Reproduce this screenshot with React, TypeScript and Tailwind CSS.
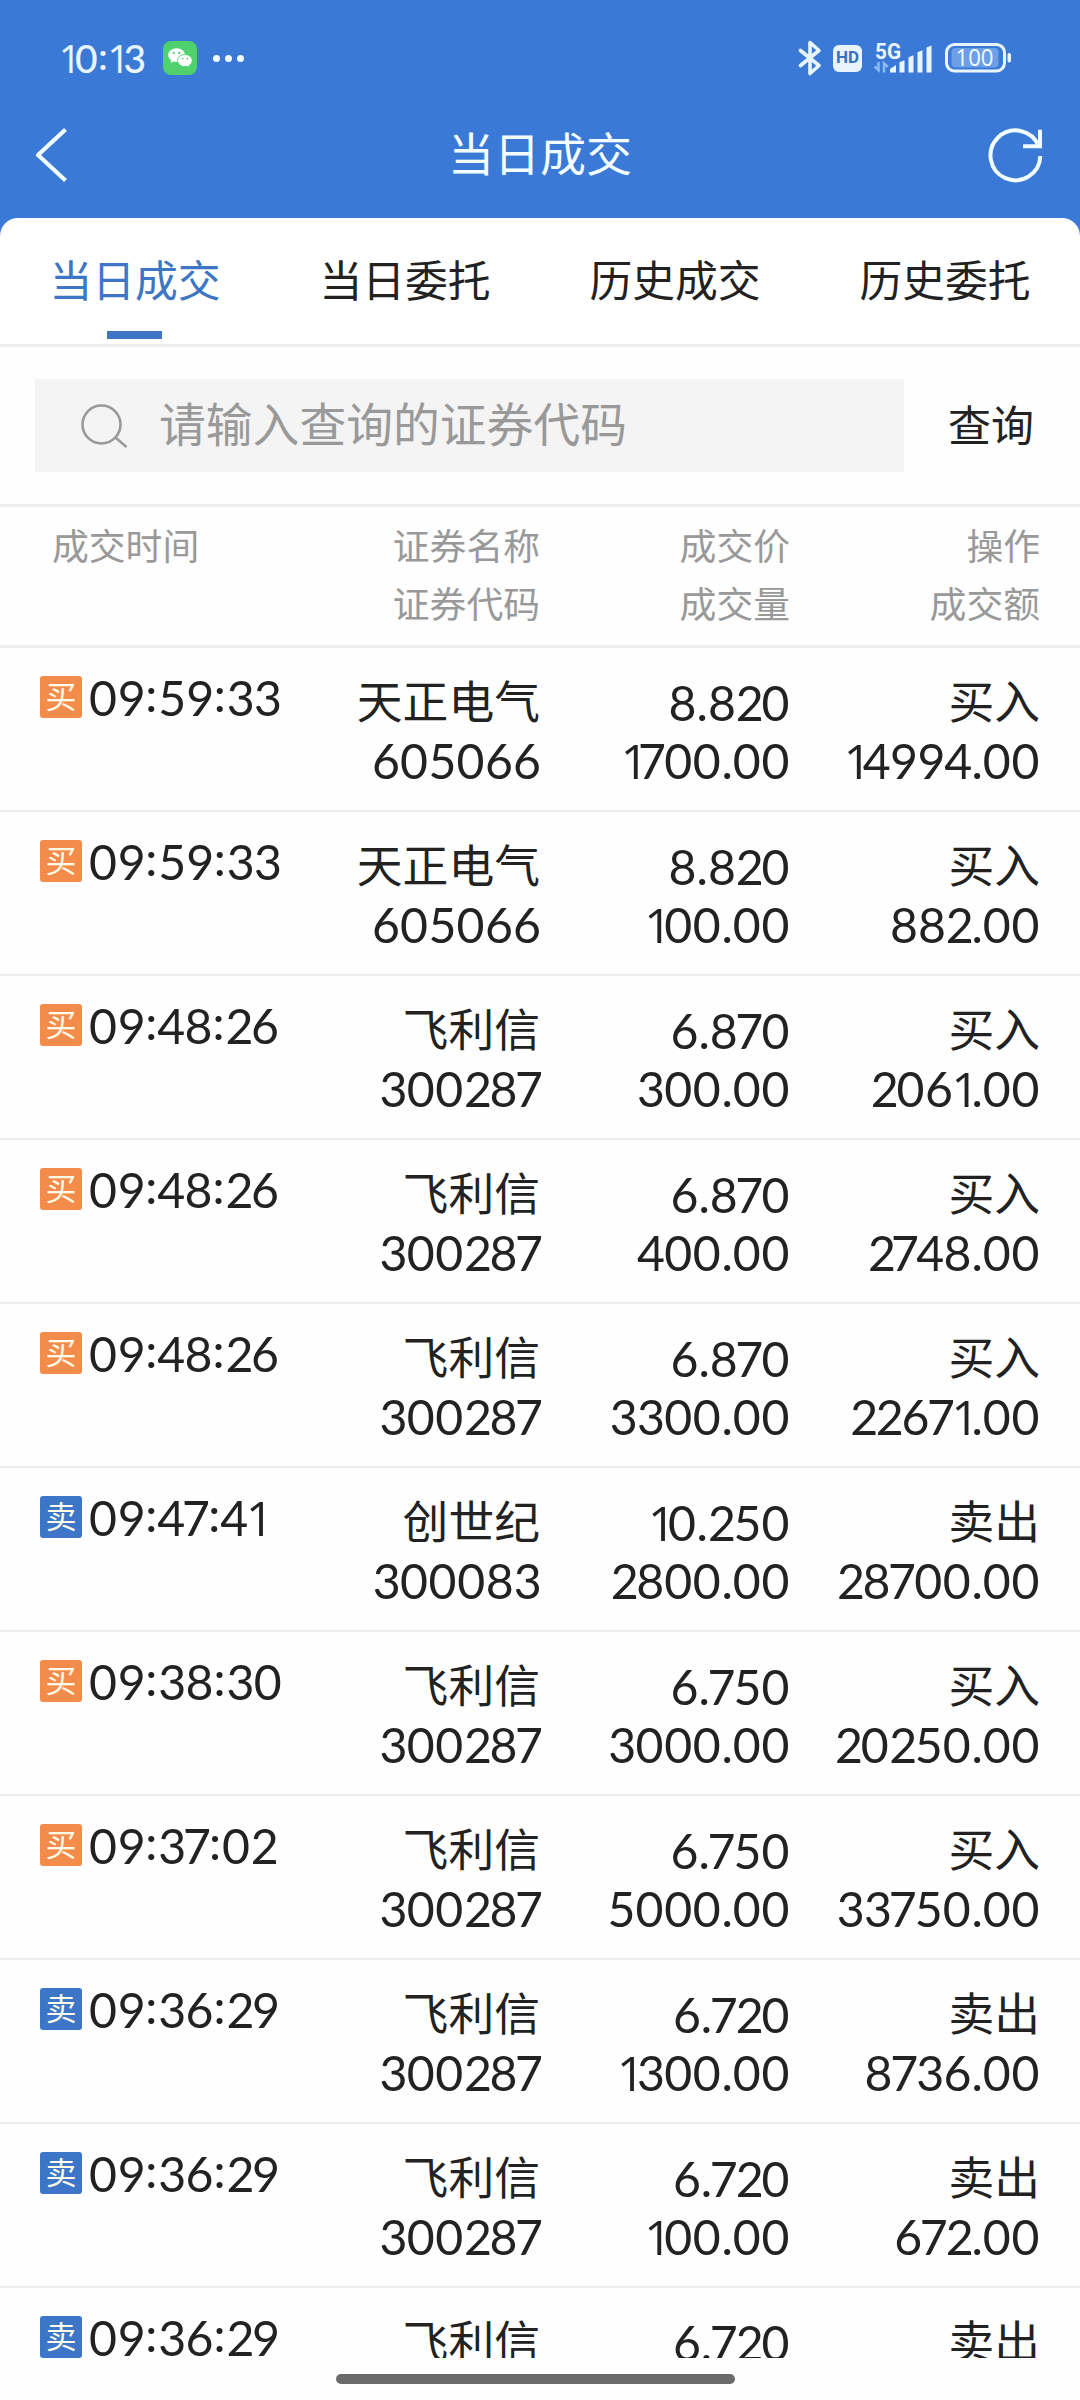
import { Fragment } from "react";
import { clsx } from "clsx";

type Side = "buy" | "sell";

interface Trade {
  side: Side;
  time: string;
  name: string;
  code: string;
  price: string;
  volume: string;
  amount: string;
}

const TABS = ["当日成交", "当日委托", "历史成交", "历史委托"];

const TRADES: Trade[] = [
  { side: "buy", time: "09:59:33", name: "天正电气", code: "605066", price: "8.820", volume: "1700.00", amount: "14994.00" },
  { side: "buy", time: "09:59:33", name: "天正电气", code: "605066", price: "8.820", volume: "100.00", amount: "882.00" },
  { side: "buy", time: "09:48:26", name: "飞利信", code: "300287", price: "6.870", volume: "300.00", amount: "2061.00" },
  { side: "buy", time: "09:48:26", name: "飞利信", code: "300287", price: "6.870", volume: "400.00", amount: "2748.00" },
  { side: "buy", time: "09:48:26", name: "飞利信", code: "300287", price: "6.870", volume: "3300.00", amount: "22671.00" },
  { side: "sell", time: "09:47:41", name: "创世纪", code: "300083", price: "10.250", volume: "2800.00", amount: "28700.00" },
  { side: "buy", time: "09:38:30", name: "飞利信", code: "300287", price: "6.750", volume: "3000.00", amount: "20250.00" },
  { side: "buy", time: "09:37:02", name: "飞利信", code: "300287", price: "6.750", volume: "5000.00", amount: "33750.00" },
  { side: "sell", time: "09:36:29", name: "飞利信", code: "300287", price: "6.720", volume: "1300.00", amount: "8736.00" },
  { side: "sell", time: "09:36:29", name: "飞利信", code: "300287", price: "6.720", volume: "100.00", amount: "672.00" },
  { side: "sell", time: "09:36:29", name: "飞利信", code: "300287", price: "6.720", volume: "100.00", amount: "672.00" }
];

const GLYPH_STYLES: Record<string, string> = {
  "0": "tracking-[0.014em]",
  "1": "font-['Open_Sans'] -ml-[0.03em] tracking-[-0.16em]",
  "2": "tracking-[-0.05em]",
  "3": "tracking-[-0.015em]",
  "4": "-ml-[0.02em] tracking-[-0.015em]",
  "7": "-ml-[0.05em] tracking-[-0.04em]",
  "9": "tracking-[-0.008em]",
  ":": "relative -top-[0.09em] tracking-[0.02em]"
};

const Figures = ({ value }: { value: string }) => (
  <>
    {value.split("").map((char, i) =>
      GLYPH_STYLES[char] ? (
        <span key={i} className={GLYPH_STYLES[char]}>
          {char}
        </span>
      ) : (
        <Fragment key={i}>{char}</Fragment>
      )
    )}
  </>
);

const WeChatIcon = () => (
  <svg width="34" height="34" viewBox="0 0 34 34">
    <rect width="34" height="34" rx="8" fill="#4fd26d" />
    <path
      d="M13.6 7.2c-4.7 0-8.4 3-8.4 6.9 0 2.2 1.2 4.1 3.1 5.4l-.8 2.5 3-1.5c1 .3 2 .4 3.1.4 4.7 0 8.4-3 8.4-6.8s-3.7-6.9-8.4-6.9z"
      fill="#fff"
    />
    <path
      d="M22 13.6c-4.2 0-7.5 2.6-7.5 6s3.3 6 7.5 6c.9 0 1.7-.1 2.5-.4l2.5 1.4-.7-2.3c1.7-1.1 2.9-2.7 2.9-4.7 0-3.3-3.2-6-7.2-6z"
      fill="#fff"
      stroke="#4fd26d"
      strokeWidth="0.9"
    />
    <g fill="#4fd26d">
      <circle cx="10.8" cy="11.9" r="1.1" />
      <circle cx="16.2" cy="11.9" r="1.1" />
      <circle cx="19.6" cy="17.6" r="0.9" />
      <circle cx="24.3" cy="17.6" r="0.9" />
    </g>
  </svg>
);

const BluetoothIcon = () => (
  <svg width="24" height="36" viewBox="0 0 24 36" fill="none" stroke="#e8f5ff" strokeWidth="3.6" strokeLinejoin="round" strokeLinecap="round">
    <path d="M2.5 10.5 21 25.5 12 33.5V2.5l9 8L2.5 25.5" />
  </svg>
);

const SignalIcon = () => (
  <svg width="60" height="36" viewBox="0 0 60 36" fill="#e8f5ff" className="overflow-visible">
    <text x="1" y="18.5" fontSize="22" fontWeight="700" fontFamily="Roboto, sans-serif" textLength="26" lengthAdjust="spacingAndGlyphs">
      5G
    </text>
    <path d="M4.5 22v8l-3.8-3.5M10 32.5v-9l3.8 3.5" fill="none" stroke="#8db9f3" strokeWidth="2.6" />
    <path d="M16 32.5V29l6-4v7.5z" />
    <path d="M25.5 32.5V22.3l5-2v12.2z" />
    <path d="M34.5 32.5V17.3l5-2v17.2z" />
    <path d="M43.5 32.5V12.3l5-2v22.2z" />
    <path d="M52.5 32.5V7.5l5-2v27z" />
  </svg>
);

const BatteryIcon = () => (
  <svg width="68" height="30" viewBox="0 0 68 30" className="overflow-visible">
    <rect x="1.5" y="1.5" width="58" height="26.5" rx="8" fill="none" stroke="#e8f5ff" strokeWidth="3" />
    <rect x="6.5" y="5" width="47" height="19.5" rx="4" fill="#6d9fe6" />
    <rect x="62.5" y="10" width="3.5" height="9.5" rx="1.7" fill="#e8f5ff" />
    <text x="10.5" y="22.8" fontSize="23" fontFamily="'Open Sans', sans-serif" fontWeight="500" fill="#f2fbff" textLength="38" lengthAdjust="spacingAndGlyphs">
      100
    </text>
  </svg>
);

const StatusBar = () => (
  <div className="flex h-[116px] items-center pl-[60px] pr-[67px] text-[#e8f5ff]">
    <span className="w-[103px] font-['Lato'] text-[39px] font-medium leading-none">
      <Figures value="10:13" />
    </span>
    <WeChatIcon />
    <span className="ml-4 flex gap-[5px]">
      <i className="size-[7px] rounded-full bg-[#f2fbff]" />
      <i className="size-[7px] rounded-full bg-[#f2fbff]" />
      <i className="size-[7px] rounded-full bg-[#f2fbff]" />
    </span>
    <div className="ml-auto flex items-center">
      <BluetoothIcon />
      <span className="ml-[11px] flex h-[27px] w-[29px] items-center justify-center rounded-md bg-[#e8f5ff] font-['Roboto'] text-[17px] font-bold text-[#3a70bd]">
        HD
      </span>
      <span className="ml-[12px]">
        <SignalIcon />
      </span>
      <span className="ml-[11px]">
        <BatteryIcon />
      </span>
    </div>
  </div>
);

const TitleBar = () => (
  <div className="flex h-[78px] items-center justify-between pl-[34px] pr-[35px]">
    <svg width="36" height="56" viewBox="0 0 36 56" fill="none" stroke="#f0fcff" strokeWidth="4.2" strokeLinejoin="round">
      <path d="M31.5 2.5 4 28l27.5 25.5" />
    </svg>
    <h1 className="pb-[3px] pl-[23px] text-[46px] leading-none text-[#f4fdff]">当日成交</h1>
    <svg width="58" height="58" viewBox="0 0 58 58" fill="none" stroke="#f0fcff" strokeWidth="4">
      <path d="M53.3 30A24.9 24.9 0 1 1 51.5 20" />
      <path d="M53 3.8v16.4H36" />
    </svg>
  </div>
);

const Tabs = () => (
  <nav className="grid h-[129px] grid-cols-4 rounded-t-[18px] border-b-[3px] border-[#ededed] bg-white">
    {TABS.map((tab, i) => (
      <div
        key={tab}
        className={clsx(
          "flex flex-col items-center justify-between pt-[35px] pb-[5px] text-[42.8px] leading-[56px]",
          i === 0 ? "text-[#3d76c4]" : "text-[#222]"
        )}
      >
        {tab}
        {i === 0 && <span className="mr-px h-2 w-[55px] bg-[#3d76c4]" />}
      </div>
    ))}
  </nav>
);

const SearchBar = () => (
  <div className="flex h-[160px] items-center border-b-[3px] border-[#ededed] pl-[35px]">
    <div className="flex h-[93px] w-[869px] items-center bg-[#f4f4f4] pl-[46px] text-[#999]">
      <svg width="48" height="46" viewBox="0 0 48 46" fill="none" stroke="#999" strokeWidth="2.6">
        <circle cx="20.5" cy="21.5" r="19" />
        <path d="M34.5 34.5 45.5 44" />
      </svg>
      <span className="pb-[2px] pl-[30px] text-[46.8px] leading-none">请输入查询的证券代码</span>
    </div>
    <button className="ml-[44px] pb-px text-[43px] leading-none text-[#222]">查询</button>
  </div>
);

const ROW_GRID = "grid grid-cols-[340px_201px_249px_250px]";

const TableHead = () => (
  <div className={clsx(ROW_GRID, "h-[141px] border-b-[3px] border-[#ededed] pt-[10px] text-right text-[36.8px] leading-[58px] text-[#999]")}>
    <span className="pl-[52px] text-left">成交时间</span>
    <div className="pr-px">
      <p>证券名称</p>
      <p>证券代码</p>
    </div>
    <div>
      <p>成交价</p>
      <p>成交量</p>
    </div>
    <div>
      <p>操作</p>
      <p>成交额</p>
    </div>
  </div>
);

const TradeRow = ({ trade }: { trade: Trade }) => (
  <li className={clsx(ROW_GRID, "h-[164px] border-b-2 border-[#ededed] pt-[25px] text-right text-[48.2px] leading-[58px]")}>
    <div className="-mt-[5px] flex items-start pl-10">
      <span
        className={clsx(
          "mt-2 flex size-[42px] items-center justify-center rounded-[3px] pb-[2px] text-[31px] leading-none text-[#fffbe8]",
          trade.side === "buy" ? "bg-[#f38b4a]" : "bg-[#3d76c9]"
        )}
      >
        {trade.side === "buy" ? "买" : "卖"}
      </span>
      <span className="pl-[7px]">
        <Figures value={trade.time} />
      </span>
    </div>
    <div>
      <p className="pr-px text-[45.8px]">{trade.name}</p>
      <p>
        <Figures value={trade.code} />
      </p>
    </div>
    <div>
      <p>
        <Figures value={trade.price} />
      </p>
      <p>
        <Figures value={trade.volume} />
      </p>
    </div>
    <div>
      <p className="text-[45.8px]">{trade.side === "buy" ? "买入" : "卖出"}</p>
      <p>
        <Figures value={trade.amount} />
      </p>
    </div>
  </li>
);

export default function App() {
  return (
    <div className="flex h-[2400px] w-[1080px] flex-col overflow-hidden bg-[#fefefe] font-['Lato','Noto_Sans_CJK_SC',sans-serif] text-[#222]">
      <header className="bg-[#3a79d6]">
        <StatusBar />
        <TitleBar />
        <div className="h-6" />
        <Tabs />
      </header>
      <SearchBar />
      <TableHead />
      <ul className="h-[1710px] shrink-0 overflow-hidden">
        {TRADES.map((trade, i) => (
          <TradeRow key={i} trade={trade} />
        ))}
      </ul>
      <div className="mx-auto mt-4 h-[10px] w-[399px] translate-x-[-5px] rounded-full bg-[#6b6b6b]" />
    </div>
  );
}
